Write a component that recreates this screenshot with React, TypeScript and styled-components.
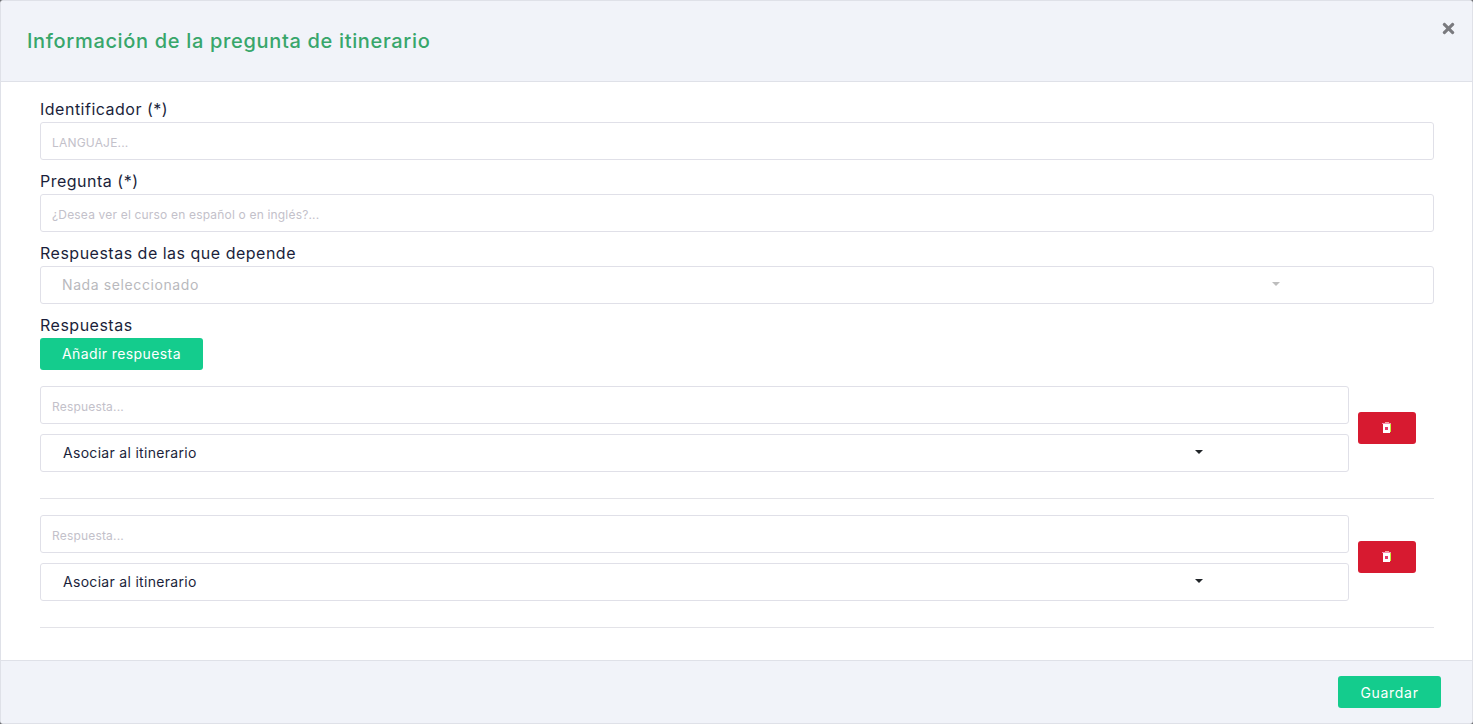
import React from 'react'
import styled, { createGlobalStyle } from 'styled-components'
import { FaTimes } from 'react-icons/fa'

const GlobalStyle = createGlobalStyle`
    html, body {
        margin: 0;
        padding: 0;
        height: 100%;
        background: #6f7075;
    }
    * {
        box-sizing: border-box;
    }
`

const answers = [1, 2]

const TrashIcon = () => (
    <svg width="10" height="12" viewBox="0 0 10 12" shapeRendering="crispEdges">
        <rect x="3" y="0" width="4" height="1" fill="#f7a6a0" />
        <rect x="0" y="1" width="9" height="1" fill="#f58cb0" />
        <rect x="1" y="2" width="7" height="9" fill="#ffffff" />
        <rect x="8" y="2" width="1" height="8" fill="#c4f03c" />
        <rect x="3" y="5" width="3" height="3" fill="#e8386c" />
    </svg>
)

const App = () => {
    return (
        <Modal>
            <GlobalStyle />
            <Header>
                <Title>Información de la pregunta de itinerario</Title>
                <CloseButton type="button" aria-label="Cerrar">
                    <FaTimes size={17} />
                </CloseButton>
            </Header>
            <Body>
                <Field>
                    <Label>Identificador (*)</Label>
                    <Input placeholder="LANGUAJE..." />
                </Field>
                <Field>
                    <Label>Pregunta (*)</Label>
                    <Input placeholder="¿Desea ver el curso en español o en inglés?..." />
                </Field>
                <Field>
                    <Label>Respuestas de las que depende</Label>
                    <SelectBox $muted>
                        <SelectText $muted>Nada seleccionado</SelectText>
                        <Caret $muted />
                    </SelectBox>
                </Field>
                <Field>
                    <Label>Respuestas</Label>
                    <AddButton type="button">Añadir respuesta</AddButton>
                </Field>
                <AnswerList>
                    {answers.map((id) => (
                        <AnswerRow key={id}>
                            <AnswerInner>
                                <AnswerFields>
                                    <Input placeholder="Respuesta..." />
                                    <SelectBox>
                                        <SelectText>Asociar al itinerario</SelectText>
                                        <Caret />
                                    </SelectBox>
                                </AnswerFields>
                                <DeleteButton type="button" aria-label="Eliminar">
                                    <TrashIcon />
                                </DeleteButton>
                            </AnswerInner>
                            <Divider />
                        </AnswerRow>
                    ))}
                </AnswerList>
            </Body>
            <Footer>
                <SaveButton type="button">Guardar</SaveButton>
            </Footer>
        </Modal>
    )
}

export default App

const Modal = styled.div`
    display: flex;
    flex-direction: column;
    height: 724px;
    border: 1px solid #dfe1e8;
    border-radius: 3px;
    background: #ffffff;
    font-family: 'Inter', 'Liberation Sans', sans-serif;
    color: #1b1f3b;
    overflow: hidden;
`

const Header = styled.header`
    display: flex;
    align-items: flex-start;
    justify-content: space-between;
    height: 81px;
    flex-shrink: 0;
    padding: 0 15px 0 26px;
    background: #f1f3f9;
    border-bottom: 1px solid #dfe1e8;
`

const Title = styled.h5`
    margin: 25px 0 0;
    font-size: 20px;
    font-weight: 500;
    line-height: 30px;
    letter-spacing: 0.67px;
    color: #38a66b;
`

const CloseButton = styled.button`
    display: flex;
    margin-top: 19px;
    padding: 0;
    border: none;
    background: transparent;
    color: #7a7a7f;
`

const Body = styled.main`
    flex: 1;
    padding: 16px 38px 0 39px;
`

const Field = styled.div`
    margin-bottom: 10px;
`

const Label = styled.label`
    display: block;
    padding-bottom: 2px;
    font-size: 16px;
    line-height: 22px;
    letter-spacing: 0.5px;
    color: #1b1f3b;
`

const Input = styled.input`
    display: block;
    width: 100%;
    height: 38px;
    padding: 2px 11px 0;
    border: 1px solid #e0e0e8;
    border-radius: 3px;
    background: #ffffff;
    font-family: inherit;
    font-size: 12px;
    letter-spacing: 0.18px;
    color: #1b1f3b;

    &::placeholder {
        color: #c3c1ca;
        opacity: 1;
    }
`

const SelectBox = styled.div<{ $muted?: boolean }>`
    display: flex;
    align-items: center;
    justify-content: space-between;
    height: 38px;
    padding: 0 ${({ $muted }) => ($muted ? '153px' : '145px')} 0 ${({ $muted }) => ($muted ? '21px' : '22px')};
    border: 1px solid #e0e0e8;
    border-radius: 3px;
    color: ${({ $muted }) => ($muted ? '#b9b9bd' : '#1b1f3b')};
`

const SelectText = styled.span<{ $muted?: boolean }>`
    font-size: 14px;
    line-height: 20px;
    letter-spacing: ${({ $muted }) => ($muted ? '0.6px' : '0.3px')};
`

const Caret = styled.span<{ $muted?: boolean }>`
    width: 0;
    height: 0;
    margin-top: -2px;
    border-top: 4px solid ${({ $muted }) => ($muted ? '#bdbdbd' : '#212529')};
    border-left: 4px solid transparent;
    border-right: 4px solid transparent;
`

const AddButton = styled.button`
    display: block;
    width: 163px;
    height: 32px;
    padding: 0 0 2px;
    border: none;
    border-radius: 3px;
    background: #14cc8d;
    font-family: inherit;
    font-size: 14px;
    font-weight: 400;
    letter-spacing: 0.4px;
    color: #ffffff;
`

const AnswerList = styled.div`
    padding-top: 6px;
`

const AnswerRow = styled.div`
    margin-bottom: 16px;
`

const AnswerInner = styled.div`
    display: flex;
    align-items: center;
`

const AnswerFields = styled.div`
    display: flex;
    flex-direction: column;
    gap: 10px;
    width: 1309px;
`

const DeleteButton = styled.button`
    display: flex;
    align-items: center;
    justify-content: center;
    width: 58px;
    height: 32px;
    margin: 0 0 2px 9px;
    padding: 0;
    border: none;
    border-radius: 3px;
    background: #d71a30;
`

const Divider = styled.hr`
    height: 1px;
    margin: 26px 0 0;
    border: none;
    background: #e3e3e8;
`

const Footer = styled.footer`
    display: flex;
    align-items: center;
    justify-content: flex-end;
    height: 63px;
    flex-shrink: 0;
    padding: 0 31px 0 0;
    background: #f1f3f9;
    border-top: 1px solid #dfe1e8;
`

const SaveButton = styled.button`
    width: 103px;
    height: 32px;
    padding: 0;
    border: none;
    border-radius: 3px;
    background: #14cc8d;
    font-family: inherit;
    font-size: 14px;
    font-weight: 400;
    letter-spacing: 0.7px;
    color: #ffffff;
`
